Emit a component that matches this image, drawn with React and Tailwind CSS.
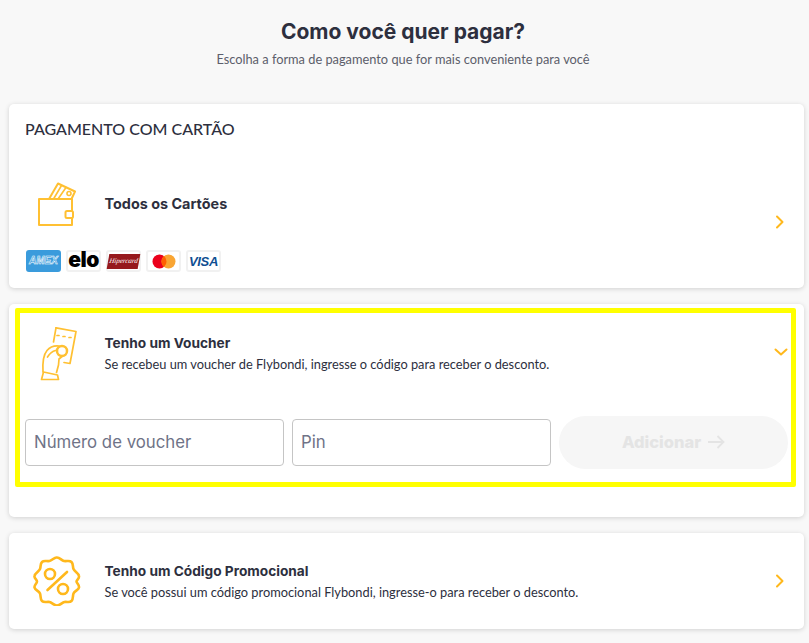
import React from "react";

const lato = "font-['Lato','Liberation_Sans',sans-serif]";
const head = "font-['Inter','Noto_Sans',sans-serif]";

function Chevron({ down }) {
  return (
    <svg width="16" height="16" viewBox="0 0 16 16" fill="none" stroke="#ffb81c" strokeWidth="2" strokeLinecap="round" strokeLinejoin="round">
      {down ? <path d="M2.500 5.500 8 10.500l5.500-5" /> : <path d="M5 2.500 10.500 8 5 13.500" />}
    </svg>
  );
}

function Wallet() {
  return (
    <svg width="38" height="45" viewBox="0 0 38 45" fill="none" stroke="#ffc032" strokeWidth="2" strokeLinejoin="round" strokeLinecap="round">
      <path d="M1 17h33v26H1Z" />
      <path d="M11 17 20 1.500l17 8-3.500 7.500" />
      <path d="M15.500 17 23.500 3.500M20 17 28 5.500" strokeWidth="1.600" />
      <circle cx="31" cy="11.500" r="2" strokeWidth="1.600" />
      <rect x="27.500" y="29" width="7.500" height="7" rx="1.500" fill="#fff" />
    </svg>
  );
}

function Voucher() {
  return (
    <svg width="37" height="54" viewBox="0 0 37 54" fill="none" stroke="#ffc032" strokeWidth="1.700" strokeLinejoin="round" strokeLinecap="round">
      <path d="M16 .800 36 4.500 30 36.500l-6-1" />
      <path d="M16 .800 13.500 15" />
      <path d="M17 8.500h2M23 9.500h2M29 10.500h2" />
      <path d="M3 45C2.500 36 4 27 7 23.500c2.500-3 7-5 12-4.500" />
      <path d="M7.500 30c2-3 4-5.500 8-6.500" />
      <circle cx="22" cy="24" r="5" strokeWidth="2.500" />
      <path d="M22 29.500 19 32l-.5 6-2 7.500" />
      <path d="M1.500 52.500 3.500 45l14 3 1 4.500Z" />
    </svg>
  );
}

function Promo() {
  return (
    <svg width="48" height="50" viewBox="0 0 48 50" fill="none" stroke="#ffb81c" strokeWidth="2.600" strokeLinejoin="round" strokeLinecap="round">
      <path d="M24 1.500c3 0 4.500 3 7 3.500 3 .500 5.500-1 7.500 1s1 4.500 2 7c1 2.500 5 4 5.500 7 .5 2.500-2.500 4-2.500 5.500s3 3.500 2.500 6c-.5 2.500-4.500 3.500-5.500 6-1 2.500 0 5.500-2 7.500s-4.500.5-7 1-4.500 3.500-7.500 3.500-5-3-7.500-3.500-5.500 1-7.500-1-1-5-2-7.500-5-3.500-5.500-6c-.5-2.500 2.500-4 2.500-6s-3-3-2.500-5.500c.5-3 4.500-4.500 5.500-7s0-5 2-7 4.500-.5 7.500-1c2.500-.500 4.500-3.500 7-3.500Z" />
      <path d="M34 16 14.500 34" />
      <circle cx="17" cy="18" r="5" />
      <circle cx="30" cy="33" r="5" />
    </svg>
  );
}

function Badge({ children, className = "" }) {
  return (
    <div className={`w-[35px] h-[22px] rounded-[3px] border-2 border-[#f1f1f1] bg-white flex items-center justify-center ${className}`}>
      {children}
    </div>
  );
}

function Brands() {
  return (
    <div className="flex gap-[5px] mt-[9px] pl-px">
      <Badge className="!bg-[#3a9bdc] !border-[#3a9bdc]">
        <span className="font-['Liberation_Sans',sans-serif] italic font-bold text-[10px] leading-none text-[#3a9bdc] [-webkit-text-stroke:0.5px_white]">AMEX</span>
      </Badge>
      <Badge>
        <span className={`${head} font-black text-[21px] leading-none text-black tracking-[-0.5px] -mt-[4px]`}>elo</span>
      </Badge>
      <Badge>
        <span className="w-[31px] h-[15px] bg-[#96191d] -skew-x-[10deg] flex items-center justify-center font-['Liberation_Serif',serif] italic text-[7px] leading-none text-white whitespace-nowrap">Hipercard</span>
      </Badge>
      <Badge>
        <svg width="24" height="15" viewBox="0 0 24 15">
          <circle cx="7.500" cy="7.500" r="7" fill="#eb001b" />
          <circle cx="16.500" cy="7.500" r="7" fill="#f9a533" />
          <path d="M12 2.100a7 7 0 0 1 0 10.800 7 7 0 0 1 0-10.800Z" fill="#ff5f00" />
        </svg>
      </Badge>
      <Badge>
        <span className="font-['Liberation_Sans',sans-serif] italic font-bold text-[13px] leading-none text-[#0f4f92] tracking-[-0.3px]">VISA</span>
      </Badge>
    </div>
  );
}

function Card({ children, className = "" }) {
  return (
    <section className={`bg-white rounded-[5px] shadow-[0_1px_5px_rgba(0,0,0,0.16)] ${className}`}>
      {children}
    </section>
  );
}

function Info({ title, text, size = "text-[13.700px]", gap = "mt-[1px]" }) {
  return (
    <div className="flex-1 min-w-0">
      <h3 className={`${head} font-bold ${size} leading-[20px] text-[#2d2f3e]`}>{title}</h3>
      {text && <p className={`${lato} text-[12.800px] leading-[20px] ${gap} text-[#2d2f3e]`}>{text}</p>}
    </div>
  );
}

const field = `w-[259px] h-[47px] rounded-[4px] border border-[#c5c5c5] px-[8px] flex items-center ${head} text-[16.800px] text-[#6f7387]`;

export default function App() {
  return (
    <div className={`min-h-[643px] bg-[#f8f8f8] pl-[9px] pr-[5px] pt-[19px] pb-[14px] overflow-hidden ${lato}`}>
      <header className="text-center h-[85px] pr-[7px]">
        <h1 className={`${head} font-bold text-[21px] leading-[26px] text-[#2d2f3e]`}>Como você quer pagar?</h1>
        <p className="text-[12.800px] leading-[20px] mt-[4px] text-[#5c5e6b]">Escolha a forma de pagamento que for mais conveniente para você</p>
      </header>

      <Card className="h-[184px] px-[16px] pt-[14px]">
        <h2 className="text-[16px] font-medium leading-[21px] text-[#2d2f3e]">PAGAMENTO COM CARTÃO</h2>
        <div className="flex items-center mt-[28px] h-[74px]">
          <div className="w-[79.500px] pl-[13px] shrink-0"><Wallet /></div>
          <Info title="Todos os Cartões" size="text-[14.400px]" />
          <div className="mt-[35px]"><Chevron /></div>
        </div>
        <Brands />
      </Card>

      <Card className="h-[213px] mt-[16px] pt-[4px] pl-[6px] pr-[8px]">
        <div className="h-[179px] border-[5px] border-[#ffff00] rounded-[2px] pt-[8px] pl-[5px] pr-[3px]">
          <div className="flex items-center h-[65px]">
            <div className="w-[79.500px] pl-[15px] shrink-0"><Voucher /></div>
            <Info title="Tenho um Voucher" text="Se recebeu um voucher de Flybondi, ingresse o código para receber o desconto." gap="mt-[1px]" />
            <div className="-mt-[4px] mr-[-1px]"><Chevron down /></div>
          </div>
          <div className="flex items-center gap-[8px] mt-[30px]">
            <div className={field}>Número de voucher</div>
            <div className={field}>Pin</div>
            <button className={`w-[229px] h-[53px] rounded-full bg-[#f6f6f6] flex items-center justify-center gap-[6px] pb-[1px] ${head} font-extrabold text-[16.500px] text-[#e4e4e4]`}>
              Adicionar
              <svg width="18" height="14" viewBox="0 0 18 14" fill="none" stroke="#e4e4e4" strokeWidth="1.800"><path d="M1 7h15.500M10.500 1l6 6-6 6" /></svg>
            </button>
          </div>
        </div>
      </Card>

      <Card className="h-[96px] mt-[16px] flex items-center px-[16px]">
        <div className="w-[79.500px] pl-[8px] shrink-0"><Promo /></div>
        <Info title="Tenho um Código Promocional" text="Se você possui um código promocional Flybondi, ingresse-o para receber o desconto." />
        <div><Chevron /></div>
      </Card>
    </div>
  );
}
